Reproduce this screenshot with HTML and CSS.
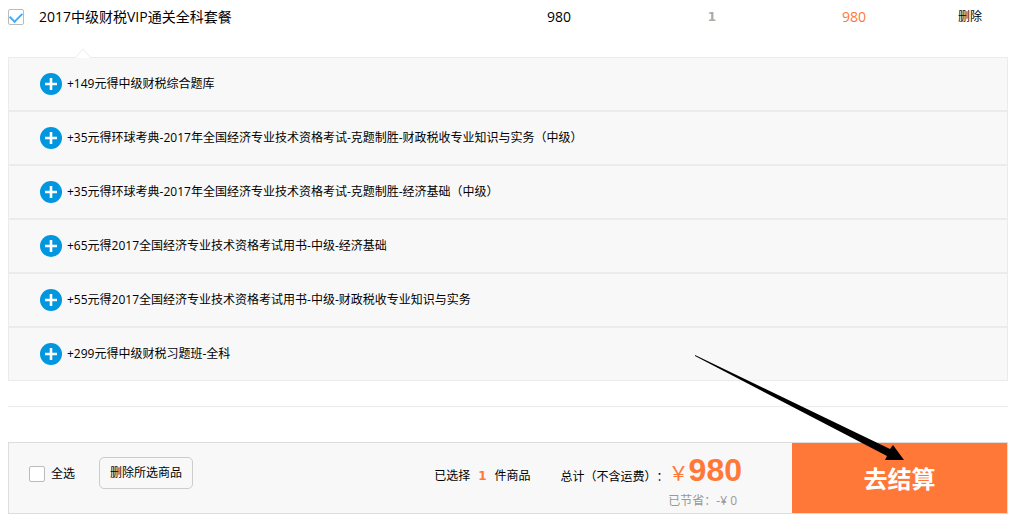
FILE: index.html
```html
<!doctype html>
<html lang="zh-CN">
<head>
    <meta charset="UTF-8">
    <title>购物车</title>
    <link rel="stylesheet" href="styles.css">
</head>
<body>
<div class="cart">
    <table class="goods">
        <tr>
            <td class="name">
                <label><input type="checkbox" class="check" checked>2017中级财税VIP通关全科套餐</label>
            </td>
            <td class="price">980</td>
            <td class="num">1</td>
            <td class="sum">980</td>
            <td class="del"><a href="javascript:;">删除</a></td>
        </tr>
    </table>
    <div class="addBox">
        <svg class="corner" width="16" height="10" viewBox="0 0 16 10">
            <path d="M0 10L8 1L16 10" fill="#fff" stroke="#ebebeb"/>
        </svg>
        <ul>
            <li><button type="button" class="add"><svg width="22" height="22" viewBox="0 0 22 22"><circle cx="11" cy="11" r="11" fill="#0096e0"/><path d="M11 5v12M5 11h12" stroke="#fff" stroke-width="2.6"/></svg><span>+149元得中级财税综合题库</span></button></li>
            <li><button type="button" class="add"><svg width="22" height="22" viewBox="0 0 22 22"><circle cx="11" cy="11" r="11" fill="#0096e0"/><path d="M11 5v12M5 11h12" stroke="#fff" stroke-width="2.6"/></svg><span>+35元得环球考典-2017年全国经济专业技术资格考试-克题制胜-财政税收专业知识与实务（中级）</span></button></li>
            <li><button type="button" class="add"><svg width="22" height="22" viewBox="0 0 22 22"><circle cx="11" cy="11" r="11" fill="#0096e0"/><path d="M11 5v12M5 11h12" stroke="#fff" stroke-width="2.6"/></svg><span>+35元得环球考典-2017年全国经济专业技术资格考试-克题制胜-经济基础（中级）</span></button></li>
            <li><button type="button" class="add"><svg width="22" height="22" viewBox="0 0 22 22"><circle cx="11" cy="11" r="11" fill="#0096e0"/><path d="M11 5v12M5 11h12" stroke="#fff" stroke-width="2.6"/></svg><span>+65元得2017全国经济专业技术资格考试用书-中级-经济基础</span></button></li>
            <li><button type="button" class="add"><svg width="22" height="22" viewBox="0 0 22 22"><circle cx="11" cy="11" r="11" fill="#0096e0"/><path d="M11 5v12M5 11h12" stroke="#fff" stroke-width="2.6"/></svg><span>+55元得2017全国经济专业技术资格考试用书-中级-财政税收专业知识与实务</span></button></li>
            <li><button type="button" class="add"><svg width="22" height="22" viewBox="0 0 22 22"><circle cx="11" cy="11" r="11" fill="#0096e0"/><path d="M11 5v12M5 11h12" stroke="#fff" stroke-width="2.6"/></svg><span>+299元得中级财税习题班-全科</span></button></li>
        </ul>
    </div>
    <div class="footBar">
        <div class="left">
            <label class="all"><input type="checkbox" class="check">全选</label>
            <button type="button" class="delAll">删除所选商品</button>
        </div>
        <div class="right">
            <p class="chosen">已选择<b>1</b>件商品</p>
            <div class="total">
                <p class="pay">总计（不含运费）<span class="colon">：</span><i>￥</i><strong>980</strong></p>
                <p class="save">已节省：-¥ 0</p>
            </div>
        </div>
        <button type="button" class="submit">去结算</button>
        <!-- 指向结算按钮的箭头 -->
        <svg class="arrow" width="210" height="106" viewBox="0 0 210 106">
            <path d="M0 0L195 94L198 90L209 105H190L192 101L0 1Z"/>
        </svg>
    </div>
</div>
</body>
</html>
```
FILE: styles.css
```css
*{
    margin: 0;
    padding: 0;
    list-style: none;
    box-sizing: border-box;
}
body{
    padding: 0 8px;
    background: #fff;
    color: #000;
    font: 12px/18px "Open Sans","Noto Sans CJK SC",sans-serif;
    text-spacing-trim: space-all;
}
a{
    color: #000;
    text-decoration: none;
}
button,input{
    font: inherit;
    color: inherit;
}
button{
    border: none;
    background: none;
    cursor: pointer;
}
.check{
    appearance: none;
    flex: none;
    width: 16px;
    height: 16px;
    border: 1px solid #bbb;
    border-radius: 2px;
    background: #fff;
    display: grid;
    place-items: center;
}
.check:checked:before{
    content: "";
    width: 10px;
    height: 6px;
    border: solid #45aaf5;
    border-width: 0 0 2px 2px;
    transform: translateY(-1px) rotate(-45deg);
}

/* 商品 */
.goods{
    width: 100%;
    table-layout: fixed;
    border-collapse: collapse;
    font-size: 14px;
    text-align: center;
}
.goods td{
    height: 34px;
}
.goods .name{
    width: 46.2%;
    text-align: left;
}
.name label{
    display: flex;
    align-items: center;
    gap: 15px;
}
.goods .price{
    width: 17.8%;
}
.goods .num{
    width: 12.8%;
    color: #aaa;
    font-family: "DejaVu Sans",sans-serif;
    font-size: 12px;
    font-weight: bold;
}
.goods .sum{
    width: 15.6%;
    color: #ff7837;
}
.goods .del{
    font-size: 12px;
}

/* 加价购 */
.addBox{
    position: relative;
    margin-top: 23px;
}
.addBox .corner{
    position: absolute;
    left: 67px;
    top: -9px;
}
.addBox li{
    border: 1px solid #ebebeb;
    background: #f8f8f8;
}
.add{
    display: flex;
    align-items: center;
    gap: 5px;
    padding: 15px 31px;
    text-align: left;
}
.add svg{
    flex: none;
}

/* 结算栏 */
.footBar{
    position: relative;
    display: flex;
    min-height: 72px;
    margin-top: 61px;
    border: 1px solid #ddd;
    background: #f8f8f8;
}
.footBar:before{
    content: "";
    position: absolute;
    left: -1px;
    right: -1px;
    top: -37px;
    border-top: 1px solid #ebebeb;
}
.left{
    display: flex;
    align-items: flex-start;
    gap: 24px;
    padding: 14px 20px;
}
.all{
    display: flex;
    align-items: center;
    gap: 6px;
    height: 34px;
}
.delAll{
    height: 32px;
    padding: 0 10px;
    border: 1px solid #ccc;
    border-radius: 5px;
}
.right{
    display: flex;
    align-items: flex-start;
    gap: 30px;
    margin-left: auto;
    padding-right: 50px;
}
.chosen{
    padding-top: 24px;
}
.chosen b{
    margin: 0 8px;
    color: #ff7837;
    font-family: "DejaVu Sans",sans-serif;
}
.total{
    padding-top: 12px;
    text-align: right;
}
.pay{
    line-height: 30px;
}
.pay i{
    color: #ff7837;
    font-size: 20px;
    font-style: normal;
}
.pay strong{
    color: #ff7837;
    font-family: "Liberation Sans",Arial,sans-serif;
    font-size: 32px;
}
.colon{
    font-family: "Noto Sans CJK TC",sans-serif;
}
.save{
    padding-right: 5px;
    color: #999;
}
.submit{
    width: 215px;
    padding-top: 2px;
    background: #ff7837;
    color: #fff;
    font-size: 24px;
    font-weight: bold;
}
.arrow{
    position: absolute;
    right: 102px;
    top: -88px;
    pointer-events: none;
}
```
